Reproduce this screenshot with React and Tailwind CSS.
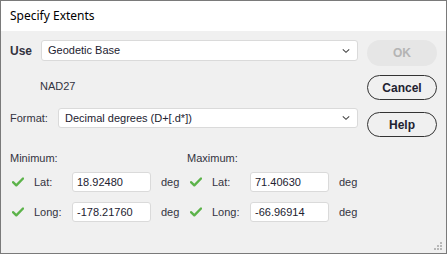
import React from "react";

const Check = () => (
  <svg width="12" height="10" viewBox="0 0 12 10" className="shrink-0">
    <path d="M1 5.2 L4.3 8.3 L11 1.5" fill="none" stroke="#5cb34a" strokeWidth="2.4" strokeLinecap="round" strokeLinejoin="round" />
  </svg>
);

const Chevron = () => (
  <svg width="8" height="5" viewBox="0 0 8 5" className="absolute right-[7px] top-1/2 -translate-y-1/2">
    <path d="M0.8 0.8 L4 3.8 L7.2 0.8" fill="none" stroke="#444" strokeWidth="1.1" />
  </svg>
);

const Field = ({ label, value }) => (
  <div className="flex items-center h-[20px]">
    <div className="w-[2px]" />
    <Check />
    <div className="w-[10px]" />
    <div className="w-[38px] text-[#333340]">{label}</div>
    <div className="w-[79px] h-[20px] bg-white border border-[#dadada] rounded-[3px] flex items-center pl-[4px] text-[#222230]">
      {value}
    </div>
    <div className="ml-[10px] text-[#333340]">deg</div>
  </div>
);

export default function App() {
  return (
    <div
      className="w-[447px] h-[254px] border border-[#7a7a7a] flex flex-col overflow-hidden"
      style={{ fontFamily: '"Liberation Sans", Arial, sans-serif' }}
    >
      <div
        className="h-[30px] bg-white flex items-center pl-[9px] text-[12px] text-black shrink-0"
        style={{ fontFamily: '"Noto Sans", "Open Sans", sans-serif' }}
      >
        Specify Extents
      </div>
      <div className="flex-1 bg-[#f0f0f0] relative flex text-[11px]">
        <div className="pl-[9px] w-[357px] flex flex-col pt-[9px]">
          <div className="flex items-center h-[21px]">
            <div className="w-[31px] font-bold text-[12px] text-[#333340]">Use</div>
            <div className="relative flex-1 h-[21px] bg-white border border-[#dadada] rounded-[3px] flex items-center pl-[6px] text-[11px] text-[#222230]">
              Geodetic Base
              <Chevron />
            </div>
          </div>
          <div className="mt-[18px] h-[14px] flex items-center pl-[30px] text-[#333340]">NAD27</div>
          <div className="mt-[15px] flex items-center h-[20px]">
            <div className="w-[48px] text-[#333340]">Format:</div>
            <div className="relative flex-1 h-[20px] bg-white border border-[#dadada] rounded-[3px] flex items-center pl-[6px] text-[#222230]">
              Decimal degrees (D+[.d*])
              <Chevron />
            </div>
          </div>
          <div className="mt-[23px] flex h-[14px] items-center text-[#333340]">
            <div className="w-[177px]">Minimum:</div>
            <div>Maximum:</div>
          </div>
          <div className="mt-[7px] flex">
            <div className="w-[178px]">
              <Field label="Lat:" value="18.92480" />
            </div>
            <Field label="Lat:" value="71.40630" />
          </div>
          <div className="mt-[10px] flex">
            <div className="w-[178px]">
              <Field label="Long:" value="-178.21760" />
            </div>
            <Field label="Long:" value="-66.96914" />
          </div>
        </div>
        <div className="ml-[9px] w-[70px] flex flex-col pt-[9px] text-[12px] font-bold">
          <div className="h-[26px] rounded-full bg-[#e6e6e6] text-[#b4b4b4] flex items-center justify-center">OK</div>
          <div className="mt-[9px] h-[25px] rounded-full border border-[#333] text-[#222230] flex items-center justify-center">Cancel</div>
          <div className="mt-[12px] h-[25px] rounded-full border border-[#333] text-[#222230] flex items-center justify-center">Help</div>
        </div>
        <svg width="9" height="9" viewBox="0 0 9 9" className="absolute right-[3px] bottom-[2px]">
          <rect x="6" y="0" width="2" height="2" fill="#b8b8b8" />
          <rect x="3" y="3" width="2" height="2" fill="#b8b8b8" />
          <rect x="6" y="3" width="2" height="2" fill="#b8b8b8" />
          <rect x="0" y="6" width="2" height="2" fill="#b8b8b8" />
          <rect x="3" y="6" width="2" height="2" fill="#b8b8b8" />
          <rect x="6" y="6" width="2" height="2" fill="#b8b8b8" />
        </svg>
      </div>
    </div>
  );
}
